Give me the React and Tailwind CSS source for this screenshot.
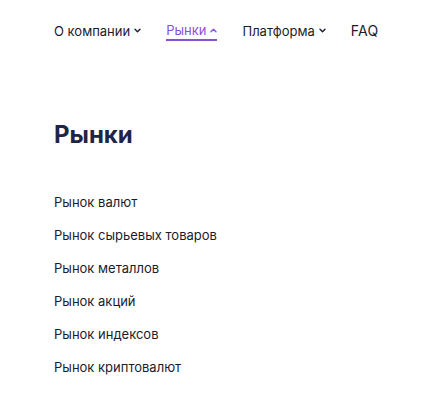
export default function App() {
  const markets = [
    "Рынок валют",
    "Рынок сырьевых товаров",
    "Рынок металлов",
    "Рынок акций",
    "Рынок индексов",
    "Рынок криптовалют",
  ];

  const Chevron = ({ up }) => (
    <svg width="7" height="5" viewBox="0 0 7 5" className="ml-[4px]" fill="none">
      <path
        d={up ? "M1 3.75L3.5 1.25L6 3.75" : "M1 1.25L3.5 3.75L6 1.25"}
        stroke="currentColor"
        strokeWidth="1.4"
        strokeLinecap="round"
        strokeLinejoin="round"
      />
    </svg>
  );

  return (
    <div className="min-h-[400px] w-[432px] bg-white font-['Inter',sans-serif] text-[#1a1c2e]">
      <nav className="flex items-center gap-[25px] whitespace-nowrap px-[54px] pt-[20px] text-[13px] leading-[18px]">
        <div className="flex items-center">
          О компании
          <Chevron />
        </div>
        <div className="flex items-center border-b-2 border-[#8a4fd8] pt-[1px] text-[#8a4fd8]">
          Рынки
          <Chevron up />
        </div>
        <div className="flex items-center">
          Платформа
          <Chevron />
        </div>
        <div className="text-[14px] tracking-[0.02em]">FAQ</div>
      </nav>

      <div className="px-[54px] pt-[78px]">
        <h1 className="text-[24px] font-bold leading-[32px] text-[#1f2544]">Рынки</h1>
        <ul className="mt-[42px] flex flex-col gap-[15px] text-[13px] leading-[18px]">
          {markets.map((m) => (
            <li key={m}>{m}</li>
          ))}
        </ul>
      </div>
    </div>
  );
}
